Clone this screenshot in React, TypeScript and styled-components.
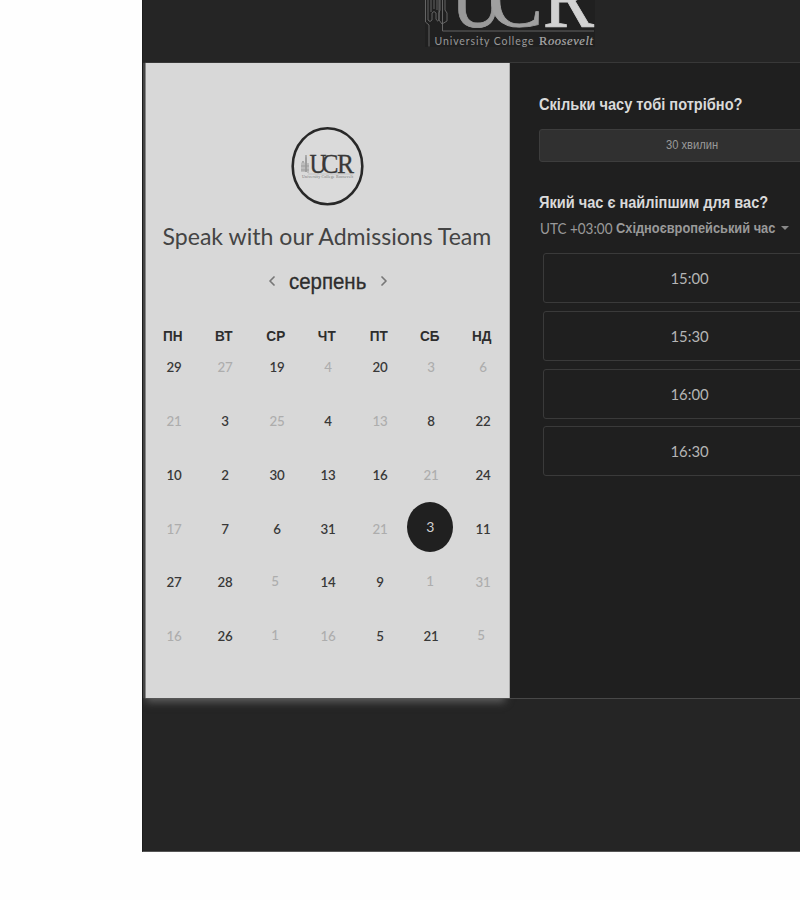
import React from 'react';
import styled, { createGlobalStyle } from 'styled-components';
import { ChevronLeft, ChevronRight } from 'lucide-react';

const Global = createGlobalStyle`
  * { box-sizing: border-box; }
  html, body { margin: 0; background: #fefefe; overflow: hidden; }
  body { font-family: Lato, "Liberation Sans", sans-serif; }
`;

const Page = styled.main`
  width: 800px;
  height: 900px;
  padding-left: 142px;
  overflow: hidden;
`;

const Frame = styled.div`
  height: 852px;
  background: #252525;
  border-left: 1px solid #1c1c1c;
  border-bottom: 1px solid #555;
  overflow: hidden;
`;

const Header = styled.header`
  height: 62px;
  padding-left: 278px;
`;

const Booking = styled.div`
  display: flex;
  height: 637px;
  margin-left: 2px;
  border-top: 1px solid #383838;
  border-bottom: 1px solid #484848;
`;

const CalendarPanel = styled.section`
  width: 365px;
  flex: none;
  background: #d8d8d8;
  border-left: 1px solid #888;
  border-right: 1px solid #aaa;
  box-shadow: -3px 0 1px #444, -2px 7px 8px -3px #606060;
  display: flex;
  flex-direction: column;
  align-items: center;
  padding-top: 63px;
`;

const Avatar = styled.svg`
  width: 74px;
  height: 80px;
  flex: none;
  margin-right: 2px;
`;

const Line = styled.span<{ $x?: number }>`
  display: inline-block;
  white-space: nowrap;
  transform: scaleX(${p => p.$x ?? 1});
`;

const Title = styled.h1`
  margin: 13px 1px 0 0;
  height: 34px;
  font-size: 24px;
  line-height: 34px;
  font-weight: 400;
  color: #444;
`;

const MonthBar = styled.div`
  display: flex;
  align-items: center;
  justify-content: center;
  width: 130px;
  height: 32px;
  margin-top: 13px;
  color: #777;
  svg { margin-top: -2px; }
`;

const Month = styled.div`
  width: 96px;
  text-align: center;
  font: 22px/30px "Liberation Sans", sans-serif;
  color: #2d2d2d;
  -webkit-text-stroke: 0.3px #2d2d2d;
`;

const Weekdays = styled.div`
  display: grid;
  grid-template-columns: repeat(7, 51.6px);
  width: 361px;
  margin: 26px 1px 0 0;
  font: bold 14px/24px "Liberation Sans", sans-serif;
  color: #2d2d2d;
  text-align: center;
`;

const Days = styled.div`
  display: grid;
  grid-template-columns: repeat(7, 51.5px);
  grid-auto-rows: 53.75px;
  width: 361px;
  margin-left: 2px;
  margin-top: -8px;
`;

const Day = styled.div<{ $muted: boolean; $raised: boolean }>`
  display: flex;
  align-items: center;
  justify-content: center;
  font-size: 14px;
  font-weight: ${p => (p.$muted ? 500 : 600)};
  color: ${p => (p.$muted ? '#adadad' : '#383838')};
  padding: ${p => (p.$raised ? '0 3px 2px 0' : '0')};
`;

const Selected = styled.div`
  width: 46px;
  height: 50px;
  margin: -2px 2px 0 0;
  flex: none;
  border-radius: 50%;
  background: #202020;
  color: #d0d0d0;
  font-weight: 400;
  line-height: 49px;
  text-align: center;
`;

const TimePanel = styled.section`
  flex: 1;
  min-width: 0;
  background: #1f1f1f;
  padding: 31px 0 0 29px;
  font-family: "Liberation Sans", sans-serif;
  overflow: hidden;
`;

const Question = styled.h2`
  margin: 0;
  height: 22px;
  font-size: 16px;
  line-height: 22px;
  color: #dadada;
  span { transform-origin: left; }
`;

const Duration = styled.div`
  width: 306px;
  height: 33px;
  margin: 13px 0 30px;
  border: 1px solid #3d3d3d;
  border-radius: 3px;
  background: #303030;
  color: #999;
  font-size: 12px;
  line-height: 31px;
  text-align: center;
`;

const Zone = styled.div`
  display: flex;
  align-items: center;
  height: 26px;
  margin: 1px 0 0 1px;
  color: #999;
  font-size: 14px;
`;

const Offset = styled.span`
  width: 76px;
  font-family: Lato, sans-serif;
  font-size: 15px;
  span { transform-origin: left; }
`;

const ZoneName = styled.span`
  width: 165px;
  font-weight: bold;
  span { transform-origin: left; }
`;

const Caret = styled.span`
  border: 4px solid transparent;
  border-top-color: #888;
  border-bottom: 0;
`;

const Slots = styled.div`
  display: grid;
  gap: 7.8px;
  margin: 12px 0 0 4px;
`;

const Slot = styled.div`
  width: 294px;
  height: 50px;
  border: 1px solid #3a3a3a;
  border-radius: 3px;
  font: 16px/47px Lato, sans-serif;
  text-align: center;
  color: #b5b5b5;
`;

const weekdays = ['ПН', 'ВТ', 'СР', 'ЧТ', 'ПТ', 'СБ', 'НД'];

// "-" marks an unavailable day, "^" a day set slightly higher, "*" the chosen one.
const days = [
  '29', '-27', '19', '-4', '20', '-3', '-6',
  '-21', '3', '-25', '4', '-13', '8', '22',
  '10', '2', '30', '13', '16', '-21', '24',
  '-17', '7', '6', '31', '-21', '*3', '11',
  '27', '28', '-^5', '14', '9', '-^1', '-31',
  '-16', '26', '-^1', '-16', '5', '21', '-^5',
];

const HeaderLogo = () => (
  <svg width="178" height="50" viewBox="421 0 178 50">
    <rect x="425" y="0" width="170" height="47" fill="#202020" />
    <g fontFamily="Liberation Serif, serif" fontSize="85" strokeWidth="0.8">
      <text x="451" y="26.5" fill="#999" stroke="#999" textLength="52" lengthAdjust="spacingAndGlyphs">U</text>
      <text x="488" y="26.5" fill="#a0a0a0" stroke="#a0a0a0" textLength="55" lengthAdjust="spacingAndGlyphs">C</text>
      <text x="543" y="26.5" fill="#d2d2d2" stroke="#d2d2d2" textLength="51" lengthAdjust="spacingAndGlyphs">R</text>
    </g>
    <g fill="none" stroke="#6c6c6c" strokeWidth="0.9">
      <path d="M425.500 0v22l3.500 3v21.500M428 0v20q2 3 4 0v-7q2-3 4 0v6q2 4 3 0V0M431 0v12M434 0v9M437 0v10M440 0v10l-1 3v7l3 4 5-3v-8l-2-3V0M442.500 0v31H594" />
    </g>
    <text x="434.500" y="44.500" fontFamily="Lato, sans-serif" fontSize="10.500" fill="#999" textLength="99">University College</text>
    <text x="539" y="44.500" fontFamily="Liberation Serif, serif" fontSize="12.500" fill="#aaa" stroke="#aaa" strokeWidth="0.2" textLength="54">
      R<tspan fontStyle="italic">oosevelt</tspan>
    </text>
  </svg>
);

const AvatarLogo = () => (
  <Avatar viewBox="290 126 74 80">
    <ellipse cx="327.500" cy="166.200" rx="34.800" ry="38" fill="#dadada" stroke="#282828" strokeWidth="2.600" />
    <g fontFamily="Liberation Serif, serif" fontSize="27" fill="#383838" stroke="#383838" strokeWidth="0.3">
      <text x="309.500" y="172.500" textLength="17" lengthAdjust="spacingAndGlyphs">U</text>
      <text x="321.500" y="172.500" textLength="17" lengthAdjust="spacingAndGlyphs">C</text>
      <text x="337" y="172.500" textLength="17" lengthAdjust="spacingAndGlyphs">R</text>
    </g>
    <path d="M302 172v-9l1-2 1 2v9M305.500 172v-14l.5-3 .5 3v14M308 173v-10M301 166h8M301 170h8" fill="none" stroke="#999" strokeWidth="0.900" />
    <path d="M308 174h45" stroke="#aaa" strokeWidth="0.500" />
    <text x="302" y="178" fontFamily="Liberation Serif, serif" fontSize="4" fill="#777" textLength="51">University College Roosevelt</text>
  </Avatar>
);

export default function App() {
  return (
    <Page>
      <Global />
      <Frame>
        <Header><HeaderLogo /></Header>
        <Booking>
          <CalendarPanel>
            <AvatarLogo />
            <Title><Line $x={0.962}>Speak with our Admissions Team</Line></Title>
            <MonthBar>
              <ChevronLeft size={16} strokeWidth={2.6} />
              <Month><Line $x={0.93}>серпень</Line></Month>
              <ChevronRight size={16} strokeWidth={2.6} />
            </MonthBar>
            <Weekdays>{weekdays.map(d => <Line key={d} $x={0.97}>{d}</Line>)}</Weekdays>
            <Days>
              {days.map((d, i) => {
                const label = d.replace(/[-^*]/g, '');
                return (
                  <Day key={i} $muted={d.startsWith('-')} $raised={d.includes('^')}>
                    {d.startsWith('*') ? <Selected>{label}</Selected> : <Line $x={0.95}>{label}</Line>}
                  </Day>
                );
              })}
            </Days>
          </CalendarPanel>
          <TimePanel>
            <Question><Line $x={0.912}>Скільки часу тобі потрібно?</Line></Question>
            <Duration><Line $x={0.93}>30 хвилин</Line></Duration>
            <Question><Line $x={0.91}>Який час є найліпшим для вас?</Line></Question>
            <Zone>
              <Offset><Line $x={0.9}>UTC +03:00</Line></Offset>
              <ZoneName><Line $x={0.915}>Східноєвропейський час</Line></ZoneName>
              <Caret />
            </Zone>
            <Slots>
              {['15:00', '15:30', '16:00', '16:30'].map(t => <Slot key={t}><Line $x={0.93}>{t}</Line></Slot>)}
            </Slots>
          </TimePanel>
        </Booking>
      </Frame>
    </Page>
  );
}
